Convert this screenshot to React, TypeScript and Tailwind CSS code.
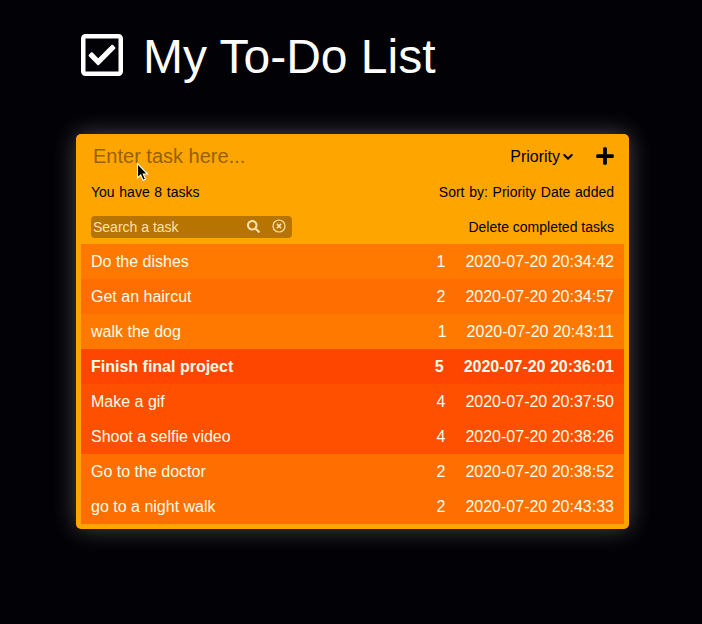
import { FaRegCheckSquare, FaSearch, FaPlus } from "react-icons/fa";

type Task = { name: string; priority: number; date: string };

const tasks: Task[] = [
  { name: "Do the dishes", priority: 1, date: "2020-07-20 20:34:42" },
  { name: "Get an haircut", priority: 2, date: "2020-07-20 20:34:57" },
  { name: "walk the dog", priority: 1, date: "2020-07-20 20:43:11" },
  { name: "Finish final project", priority: 5, date: "2020-07-20 20:36:01" },
  { name: "Make a gif", priority: 4, date: "2020-07-20 20:37:50" },
  { name: "Shoot a selfie video", priority: 4, date: "2020-07-20 20:38:26" },
  { name: "Go to the doctor", priority: 2, date: "2020-07-20 20:38:52" },
  { name: "go to a night walk", priority: 2, date: "2020-07-20 20:43:33" },
];

const rowStyle: Record<number, string> = {
  1: "bg-[#ff7800]",
  2: "bg-[#ff6e00]",
  4: "bg-[#ff5000]",
  5: "bg-[#ff4600] font-bold",
};

function TaskRow({ task }: { task: Task }) {
  return (
    <li className={`flex h-[35px] items-center pr-2.5 pl-2.5 text-base text-[#fffde8] ${rowStyle[task.priority]}`}>
      <span className="grow">{task.name}</span>
      <span className="mr-5">{task.priority}</span>
      <span>{task.date}</span>
    </li>
  );
}

export default function App() {
  return (
    <div className="relative h-[624px] w-[702px] overflow-hidden bg-[#020206] font-['Liberation_Sans',Arial,sans-serif]">
      <header className="flex h-[134px] items-start pt-[31px] pl-[81px] text-white">
        <FaRegCheckSquare className="h-12 w-[42px]" />
        <h1 className="ml-5 text-[48px] leading-[52px]">My To-Do List</h1>
      </header>
      <main className="ml-[76px] h-[395px] w-[553px] rounded-[5px] bg-[#ffa500] px-[5px] text-black shadow-[0_0_24px_rgba(235,240,235,0.3)]">
        <div className="flex h-[44px] items-center pr-2.5 pl-3">
          <span className="grow text-[20px] text-[#966100]">Enter task here...</span>
          <span className="pt-px text-base">Priority</span>
          <svg className="mt-px ml-[3px] h-[6px] w-[10px]" viewBox="0 0 10 6" fill="none" stroke="currentColor" strokeWidth="2" strokeLinecap="round">
            <path d="M1.3 1l3.7 3.7L8.700 1" />
          </svg>
          <FaPlus className="ml-[23px] h-[20px] w-[18px]" />
        </div>
        <div className="flex h-[28px] items-center justify-between px-2.5 text-sm [word-spacing:0.8px]">
          <span>You have 8 tasks</span>
          <span>Sort by: Priority Date added</span>
        </div>
        <div className="flex h-[38px] items-center justify-between px-2.5 pt-[4px] text-sm">
          <div className="flex h-[22px] w-[201px] items-center rounded bg-[#b77400] pl-0.5 text-[#ffe0a8]">
            <span className="grow">Search a task</span>
            <FaSearch className="mb-[2px] size-[13px]" />
            <svg className="mr-1.5 mb-[2px] ml-3 size-[14px]" viewBox="0 0 14 14" fill="none" stroke="currentColor">
              <circle cx="7" cy="7" r="6" strokeWidth="1.2" />
              <path d="M4.900 4.900l4.200 4.200M9.100 4.900l-4.200 4.200" strokeWidth="1.5" />
            </svg>
          </div>
          <span>Delete completed tasks</span>
        </div>
        <ul>
          {tasks.map((task) => (
            <TaskRow key={task.name} task={task} />
          ))}
        </ul>
      </main>
      <svg className="absolute top-[162px] left-[136px] h-[20px] w-[13px]" viewBox="0 0 13 20">
        <path d="M1.500 1.500v14.500l3.200-3 2.300 5.200 2.500-1.100-2.300-5.100h4.300z" fill="black" stroke="white" strokeWidth="1.1" />
      </svg>
    </div>
  );
}
